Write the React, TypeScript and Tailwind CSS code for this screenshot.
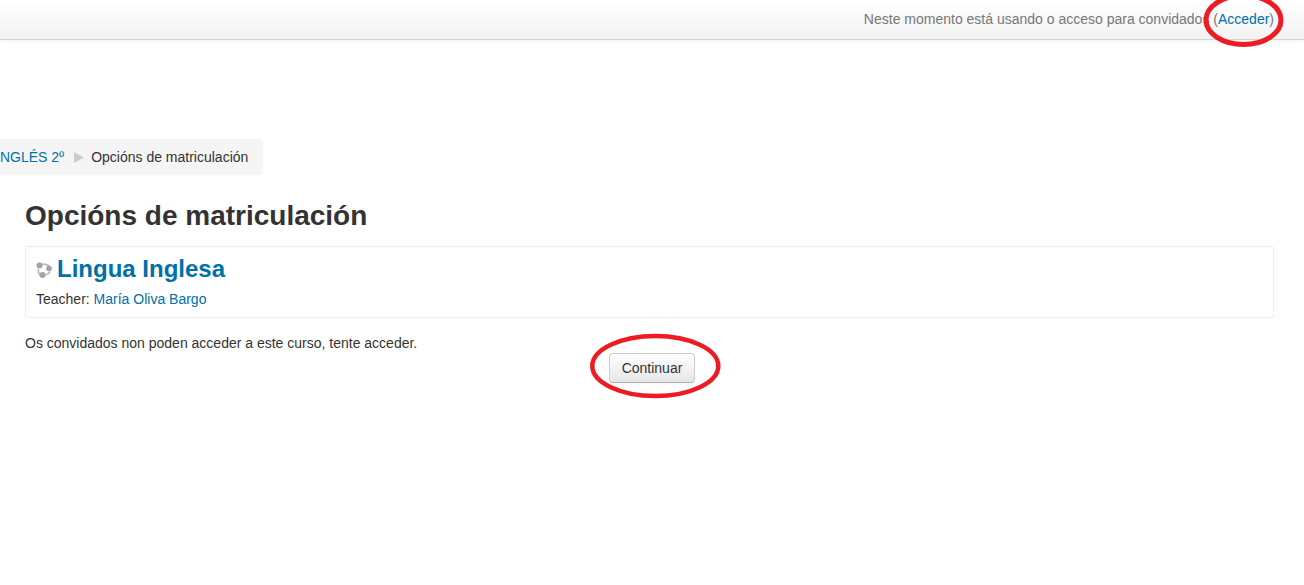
const App = () => {
	return (
		<div className="relative h-[585px] w-full overflow-hidden bg-white font-['Liberation_Sans',Arial,sans-serif] text-sm text-[#333]">
			{/* Top bar */}
			<div className="flex h-10 items-center justify-end border-b border-[#d4d4d4] bg-gradient-to-b from-white to-[#f2f2f2] pr-[30px] pb-[2px] shadow-[0_1px_6px_rgba(0,0,0,0.06)]">
				<span className="text-[#777]">
					Neste momento está usando o acceso para convidados (<a className="text-[#0070a8]">Acceder</a>)
				</span>
			</div>

			{/* Breadcrumb */}
			<div className="mt-[99px] flex">
				<div className="-ml-[4px] flex h-9 items-center rounded bg-[#f5f5f5] pr-[15px]">
					<a className="text-[#0070a8]">INGLÉS 2º</a>
					<svg width="10" height="11" viewBox="0 0 10 11" className="mr-[7px] ml-[10px]">
						<path d="M0 0 L10 5.5 L0 11 Z" fill="#ccc" />
					</svg>
					<span>Opcións de matriculación</span>
				</div>
			</div>

			<div className="px-[25px]">
				<h2 className="mt-[22px] text-[28px] leading-[38px] font-bold">Opcións de matriculación</h2>

				{/* Course box */}
				<div className="mt-[11px] h-[72px] w-[1249px] rounded border border-dotted border-[#ddd] px-[10px]">
					<div className="mt-[7px] flex items-center">
						<svg width="16" height="16" viewBox="0 0 16 16" className="mt-[2px] mr-[5px]">
							<path d="M6 2.3 Q10 1.8 13.5 4 M2.2 7 Q2 10.5 4 12.8 M9.5 13 Q12.5 12.2 14.3 9.5" stroke="#bbb" strokeWidth="1.8" fill="none" />
							<circle cx="3.5" cy="3.5" r="3" fill="#a3a3a3" />
							<circle cx="13" cy="6.5" r="2.8" fill="#a3a3a3" />
							<circle cx="6.5" cy="13" r="3" fill="#a3a3a3" />
						</svg>
						<h3 className="text-2xl leading-[30px] font-bold text-[#0070a8]">Lingua Inglesa</h3>
					</div>
					<p className="mt-[5px] leading-5">
						Teacher: <a className="text-[#0070a8]">María Oliva Bargo</a>
					</p>
				</div>

				<p className="mt-[15px] leading-5">Os convidados non poden acceder a este curso, tente acceder.</p>

				{/* Continue button */}
				<div className="flex justify-center">
					<button
						type="button"
						className="h-[30px] w-[86px] rounded border border-[#ccc] border-b-[#b3b3b3] bg-gradient-to-b from-white to-[#e6e6e6] text-[#333] shadow-[0_1px_2px_rgba(0,0,0,0.05)]"
					>
						Continuar
					</button>
				</div>
			</div>

			{/* Red marker circles drawn over the page */}
			<svg width="1304" height="585" className="pointer-events-none absolute top-0 left-0">
				<ellipse cx="1243.5" cy="20" rx="37.5" ry="24.5" fill="none" stroke="#ed1c24" strokeWidth="5" />
				<ellipse cx="655.3" cy="366" rx="63" ry="30" fill="none" stroke="#ed1c24" strokeWidth="4.5" />
			</svg>
		</div>
	);
};

export default App;
